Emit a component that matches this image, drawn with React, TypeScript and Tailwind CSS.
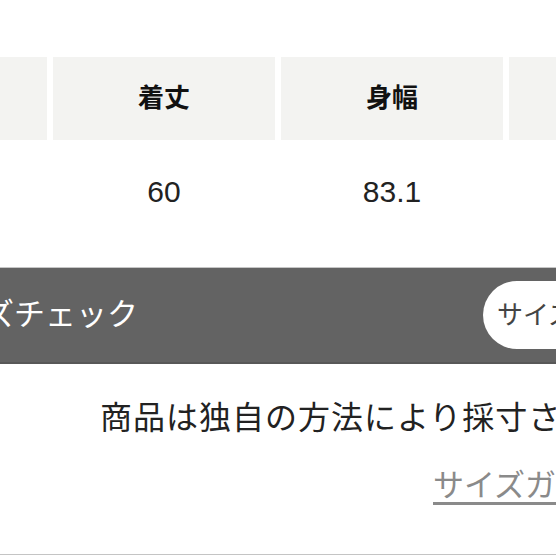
const font = { fontFamily: '"Liberation Sans", "Noto Sans CJK JP", sans-serif' };

const headers = ['肩幅', '着丈', '身幅', '袖丈'];
const values = ['42', '60', '83.1', '58'];

export default function App() {
  return (
    <div className="w-[556px] h-[556px] overflow-hidden bg-white" style={font}>
      {/* size table */}
      <div className="pt-[57px]">
        <div className="flex gap-[6px] ml-[-175px]">
          {headers.map((h) => (
            <div
              key={h}
              className="w-[222px] h-[83px] shrink-0 bg-[#f3f3f1] flex items-center justify-center text-[26px] font-bold text-[#111]"
            >
              {h}
            </div>
          ))}
        </div>
        <div className="flex gap-[6px] ml-[-175px]">
          {values.map((v) => (
            <div
              key={v}
              className="w-[222px] h-[102px] shrink-0 flex items-center justify-center text-[30px] text-[#222]"
            >
              {v}
            </div>
          ))}
        </div>
      </div>

      {/* size check bar */}
      <div className="mt-[25px] h-[97px] bg-[#636363] border-t border-t-[#c6c6c6] border-b-2 border-b-[#585858] flex items-center">
        <span className="ml-[-78px] text-[31px] text-white whitespace-nowrap">サイズチェック</span>
        <button className="w-[200px] h-[68px] ml-auto mr-[-127px] pl-[14px] rounded-full bg-white text-[26px] text-[#444] text-left whitespace-nowrap">
          サイズガイド
        </button>
      </div>

      {/* note */}
      <div className="h-[191px] border-b border-b-[#c4c4c4] flex flex-col">
        <p className="mt-[35px] pl-[100px] text-[32px] tracking-[1px] leading-[38px] text-[#222] whitespace-nowrap">
          商品は独自の方法により採寸されています
        </p>
        <a
          href="#"
          className="mt-[30px] pl-[433px] text-[31px] leading-[38px] text-[#8a8a8a] underline underline-offset-[6px] whitespace-nowrap"
        >
          サイズガイド
        </a>
      </div>
    </div>
  );
}
